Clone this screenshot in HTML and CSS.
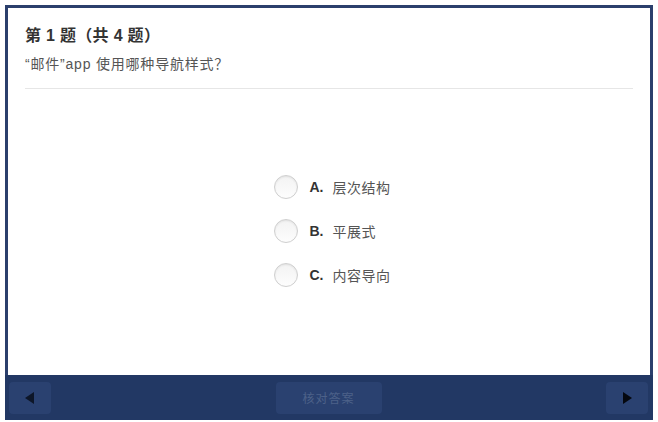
FILE: index.html
```html
<!DOCTYPE html>
<html lang="zh">
<head>
<meta charset="utf-8">
<link rel="stylesheet" href="styles.css">
</head>
<body>
<div class="page">
  <div class="frame">
    <div class="content">
      <div class="header">
        <div class="title">第 1 题（共 4 题）</div>
        <div class="question">“邮件”app 使用哪种导航样式？</div>
      </div>
      <div class="options">
        <div class="option"><span class="radio"></span><span class="letter">A.</span><span class="text">层次结构</span></div>
        <div class="option"><span class="radio"></span><span class="letter">B.</span><span class="text">平展式</span></div>
        <div class="option"><span class="radio"></span><span class="letter">C.</span><span class="text">内容导向</span></div>
      </div>
    </div>
    <div class="footer">
      <div class="btn nav"><svg width="10" height="12" viewBox="0 0 10 12"><polygon points="9,0 9,12 0,6" fill="#0d1628"/></svg></div>
      <div class="btn check">核对答案</div>
      <div class="btn nav"><svg width="10" height="12" viewBox="0 0 10 12"><polygon points="1,0 1,12 10,6" fill="#05080f"/></svg></div>
    </div>
  </div>
</div>
</body>
</html>
```

FILE: styles.css
```css
html, body {
  margin: 0;
  padding: 0;
  background: #ffffff;
}
body {
  font-family: "Liberation Sans", "Noto Sans CJK SC", sans-serif;
}
.page {
  padding: 5px 5px 2px 5px;
  width: 648px;
}
.frame {
  height: 415px;
  display: flex;
  flex-direction: column;
}
.content {
  flex: 1;
  background: #fff;
  border: 3px solid #2b3f6c;
  border-bottom: none;
  display: flex;
  flex-direction: column;
}
.header {
  margin: 0 17px 0 17px;
  padding-top: 17px;
  padding-bottom: 15px;
  border-bottom: 1px solid #e6e6e6;
}
.title {
  font-size: 16px;
  font-weight: bold;
  color: #333;
  line-height: 22px;
  letter-spacing: 0.3px;
}
.question {
  font-size: 14px;
  color: #555;
  line-height: 18px;
  margin-top: 8px;
  letter-spacing: 0.8px;
}
.options {
  display: flex;
  flex-direction: column;
  align-items: flex-start;
  align-self: center;
  gap: 20px;
  margin-top: 86px;
  margin-left: 6px;
}
.option {
  display: flex;
  align-items: center;
  height: 24px;
}
.radio {
  width: 22px;
  height: 22px;
  border-radius: 50%;
  border: 1px solid #cfcfcf;
  background: linear-gradient(#f3f3f3, #fdfdfd);
  box-shadow: inset 0 1px 2px rgba(0,0,0,0.08);
  margin-right: 12px;
}
.letter {
  font-size: 14px;
  font-weight: bold;
  color: #333;
  margin-right: 9px;
}
.text {
  font-size: 14px;
  color: #555;
  letter-spacing: 0.5px;
}
.footer {
  height: 45px;
  background: #223864;
  display: flex;
  align-items: center;
  justify-content: space-between;
  padding: 0 5px 0 4px;
}
.btn {
  height: 32px;
  background: #2a4170;
  border-radius: 4px;
  display: flex;
  align-items: center;
  justify-content: center;
}
.nav {
  width: 42px;
}
.check {
  width: 106px;
  font-size: 12px;
  color: #4d6189;
  letter-spacing: 1px;
}
```
